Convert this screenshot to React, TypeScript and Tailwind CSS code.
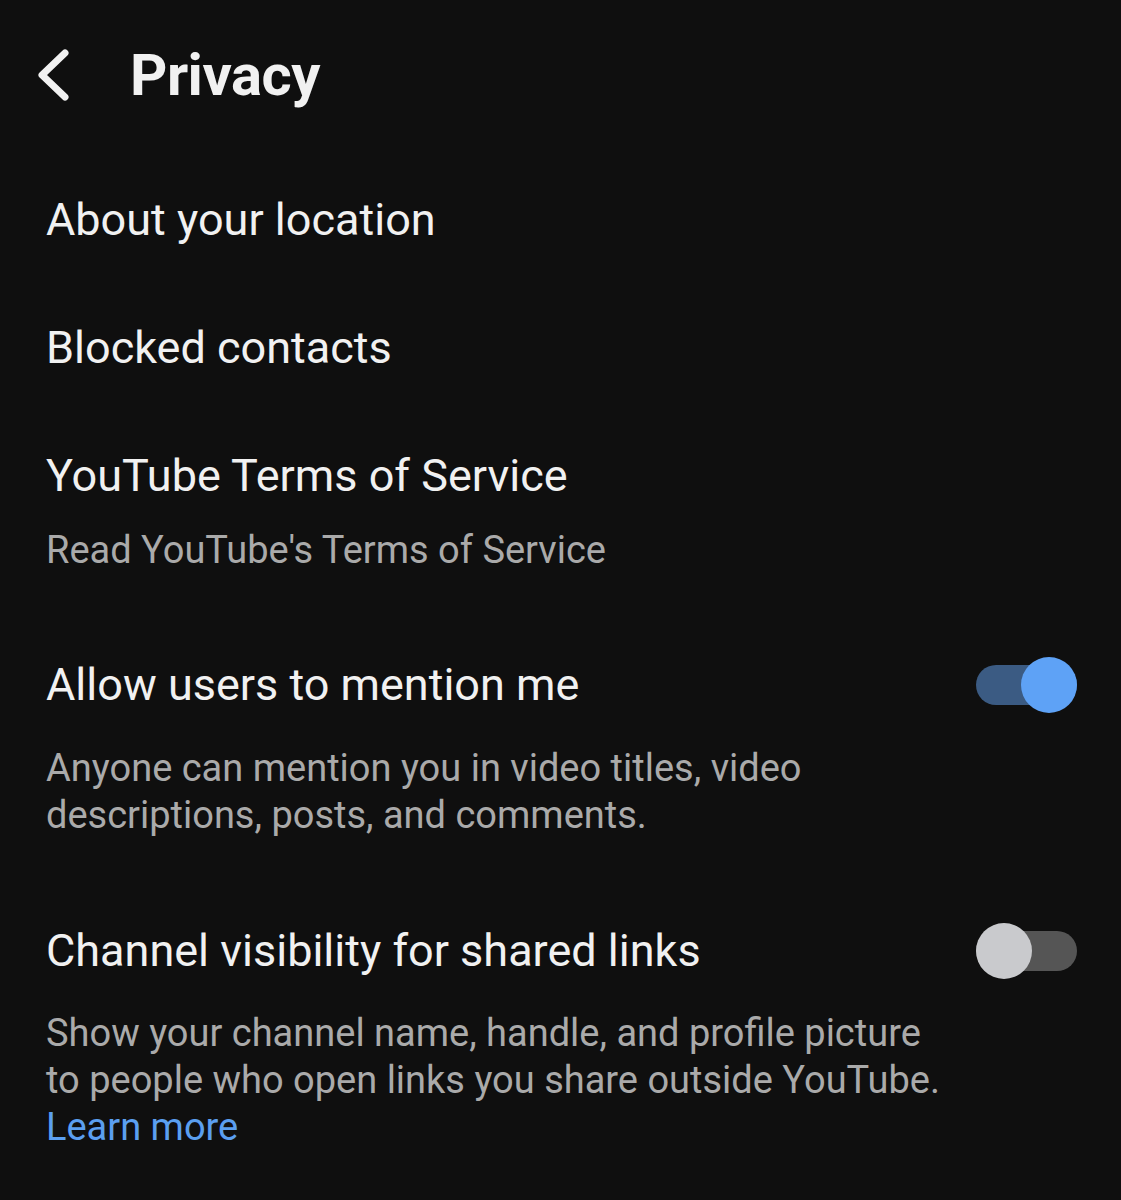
import React from "react"

function Toggle({ on }: { on: boolean }) {
    return (
        <div className="relative w-[101px] h-[56px] -my-[4px] flex items-center shrink-0">
            <div className={`w-full h-[40px] rounded-full ${on ? "bg-[#3b5b83]" : "bg-[#555555]"}`} />
            <div
                className={`absolute top-0 w-[56px] h-[56px] rounded-full ${on ? "right-0 bg-[#5ea2f6]" : "left-0 bg-[#c9cacd]"}`}
            />
        </div>
    )
}

export default function App() {
    return (
        <div className="w-[1121px] min-h-[1200px] bg-[#0f0f0f] text-[#f1f1f1] font-['Roboto',sans-serif]">
            <header className="h-[150px] flex items-center pl-[36px]">
                <svg width="34" height="54" viewBox="0 0 34 54" className="shrink-0">
                    <polyline
                        points="29,5 6,27 29,49"
                        fill="none"
                        stroke="#f1f1f1"
                        strokeWidth="7"
                        strokeLinecap="round"
                        strokeLinejoin="round"
                    />
                </svg>
                <h1 className="ml-[60px] text-[58px] font-bold tracking-[-0.5px] leading-none">Privacy</h1>
            </header>

            <div className="pt-[6px] pl-[46px] pr-[44px]">
                <div className="py-[40px]">
                    <div className="text-[45px] leading-[48px]">About your location</div>
                </div>
                <div className="py-[40px]">
                    <div className="text-[45px] leading-[48px]">Blocked contacts</div>
                </div>
                <div className="pt-[40px] pb-[47px]">
                    <div className="text-[45px] leading-[48px]">YouTube Terms of Service</div>
                    <div className="mt-[27px] text-[38px] leading-[47px] text-[#aaaaaa]">Read YouTube's Terms of Service</div>
                </div>
                <div className="pt-[40px] pb-[48px]">
                    <div className="flex items-center justify-between h-[48px]">
                        <div className="text-[45px] leading-[48px]">Allow users to mention me</div>
                        <Toggle on={true} />
                    </div>
                    <div className="mt-[36px] text-[38px] leading-[47px] text-[#aaaaaa] max-w-[800px]">
                        Anyone can mention you in video titles, video descriptions, posts, and comments.
                    </div>
                </div>
                <div className="pt-[40px] pb-[40px]">
                    <div className="flex items-center justify-between h-[48px]">
                        <div className="text-[45px] leading-[48px]">Channel visibility for shared links</div>
                        <Toggle on={false} />
                    </div>
                    <div className="mt-[35px] text-[38px] leading-[47px] text-[#aaaaaa] max-w-[905px]">
                        Show your channel name, handle, and profile picture to people who open links you share outside YouTube.
                        <br />
                        <span className="text-[#5b9ff0]">Learn more</span>
                    </div>
                </div>
            </div>
        </div>
    )
}
